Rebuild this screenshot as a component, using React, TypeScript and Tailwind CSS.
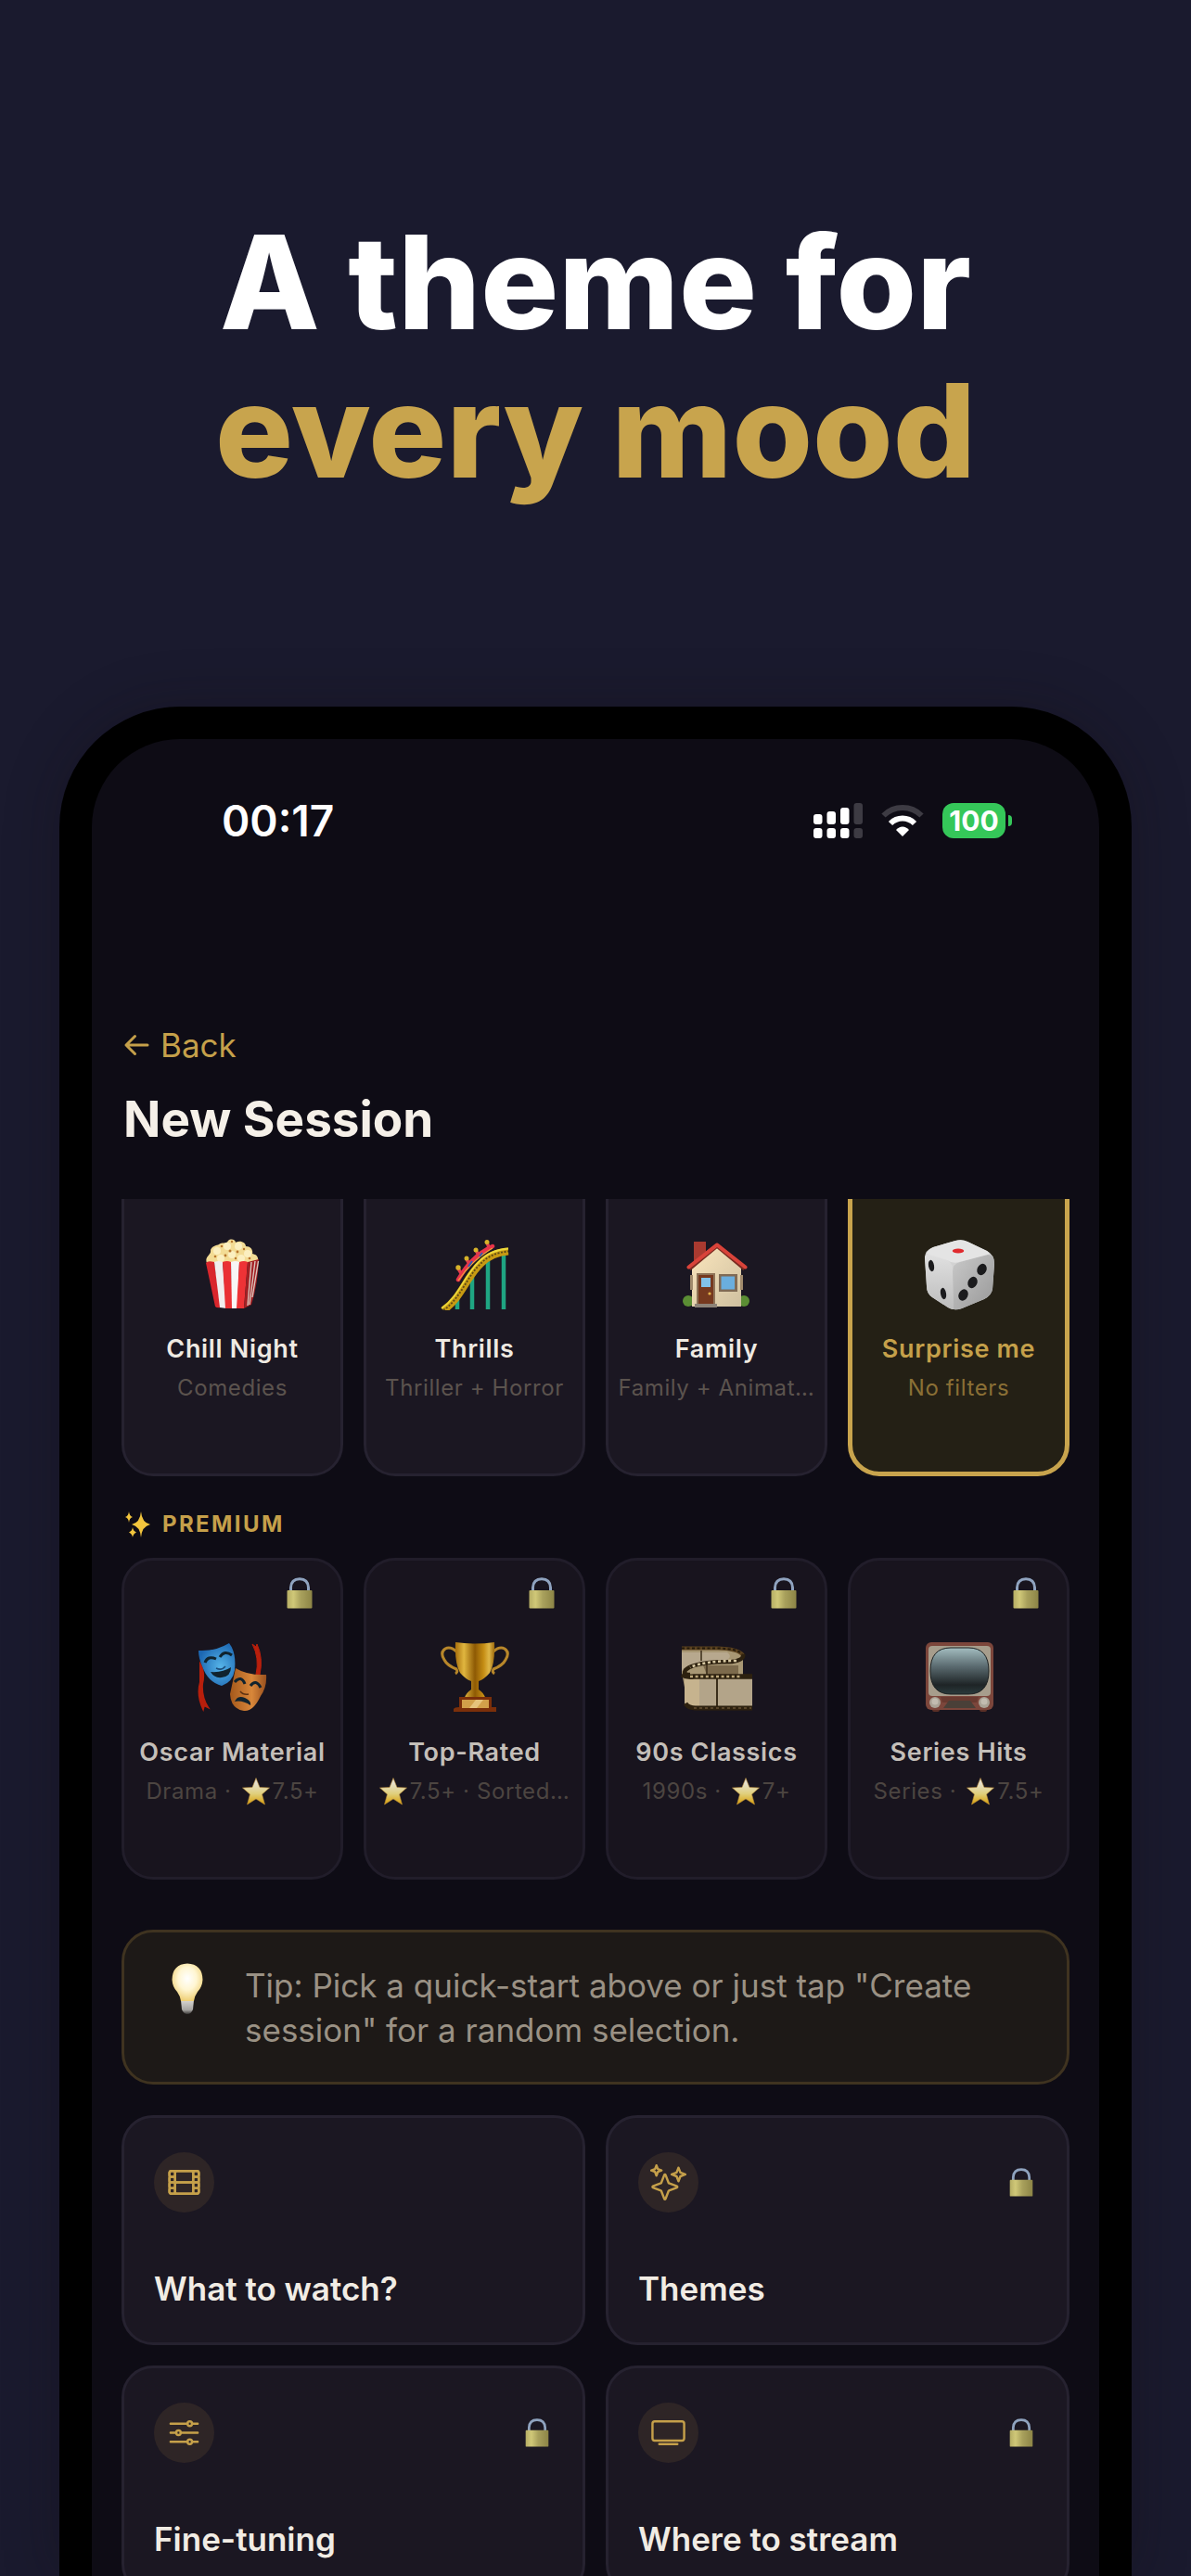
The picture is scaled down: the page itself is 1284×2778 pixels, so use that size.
import React from 'react';
import { IoFilmOutline, IoOptionsOutline, IoSparklesOutline, IoTvOutline } from 'react-icons/io5';

const Popcorn = () => (
  <svg viewBox="0 0 78 78" className="w-[78px] h-[78px]" aria-hidden="true">
    <path d="M11 27 C8 20 16 18 15 14 C15 9 22 8 24 7 C27 4 32 7 34 3 C37 0 42 2 42 5 C47 2 53 5 53 9 C59 9 61 14 60 17 C66 18 67 22 66 27 Z" fill="#f3dc95" />
    <g fill="#fbefc0">
      <circle cx="22" cy="14" r="4" /><circle cx="33" cy="9" r="4" /><circle cx="45" cy="9" r="4" />
      <circle cx="55" cy="17" r="4" /><circle cx="38" cy="18" r="4" /><circle cx="26" cy="22" r="4" /><circle cx="48" cy="22" r="4" />
    </g>
    <g fill="#b9772f">
      <circle cx="27" cy="9" r="1.3" /><circle cx="38" cy="4" r="1.2" /><circle cx="36" cy="14" r="1.5" /><circle cx="20" cy="20" r="1.3" />
      <circle cx="44" cy="15" r="1.4" /><circle cx="51" cy="12" r="1.2" /><circle cx="31" cy="19" r="1.4" /><circle cx="42" cy="22" r="1.2" /><circle cx="57" cy="22" r="1.3" />
    </g>
    <path d="M10 27 Q12 24 19 26 L26 75 Q22 76 20 74 Z" fill="#d9262c" />
    <path d="M19 26 Q24 24 28 26 L32 76 L25 75 Z" fill="#f1eeee" />
    <path d="M28 26 Q33 24 37 26 L39 76 L31 76 Z" fill="#ea3034" />
    <path d="M37 26 Q42 24 46 26 L44 76 L38 76 Z" fill="#f8f6f6" />
    <path d="M46 26 Q51 24 55 26 L51 76 L43 76 Z" fill="#ee3336" />
    <path d="M55 26 L67 23 Q66 50 59 72 L51 76 Z" fill="#a32024" />
    <path d="M59 26 L55 73 M63 25 L57 72 M66.500 25 L60 64" stroke="#d9c4bb" strokeWidth="1.400" />
  </svg>
);

const Coaster = () => (
  <svg viewBox="0 0 78 78" className="w-[78px] h-[78px]" fill="none" aria-hidden="true">
    <path d="M20 64 V77 M36 42 V77 M53 24 V77 M70 17 V77" stroke="#1fa582" strokeWidth="4.500" />
    <path d="M5 78 C24 65 30 42 45 28 Q56 16 75 14.500" stroke="#c79a12" strokeWidth="8" />
    <path d="M3 76 C22 63 28 40 43 26 Q55 13 75 11.500" stroke="#ecd93c" strokeWidth="1.800" />
    <path d="M5 78 C24 65 30 42 45 28 Q56 16 75 14.500" stroke="#5b4a18" strokeWidth="1.800" strokeDasharray="2 1.600" />
    <path d="M21 45 Q27 35 32 29 Q43 16 58 9" stroke="#e8334a" strokeWidth="4.500" strokeLinecap="round" />
    <path d="M21 46 Q36 24 58 11" stroke="#f0a23a" strokeWidth="1.300" />
    <path d="M24 38 L21 33 M33 28 L30 23 M43 19 L40 13 M54 10 L52 5" stroke="#e03a4d" strokeWidth="3.500" />
    <path d="M32 31 L36 25 M44 20 L47 16" stroke="#345cb0" strokeWidth="2" />
    <g fill="#d7b32a">
      <circle cx="21" cy="32" r="2.700" /><circle cx="30" cy="22" r="2.500" /><circle cx="40" cy="13" r="2.500" /><circle cx="52" cy="4.500" r="2.500" />
    </g>
  </svg>
);

const House = () => (
  <svg viewBox="0 0 78 78" className="w-[78px] h-[78px]" aria-hidden="true">
    <defs>
      <linearGradient id="houseWall" x1="0" y1="0" x2="1" y2="1">
        <stop offset="0" stopColor="#fbe6bd" /><stop offset="1" stopColor="#cfc0a0" />
      </linearGradient>
    </defs>
    <path d="M14 4 H27 V16 L14 27 Z" fill="#a93a30" />
    <circle cx="8" cy="68" r="6" fill="#5b8e34" />
    <circle cx="68" cy="68" r="6" fill="#5b8e34" />
    <path d="M12 30 L39 8 L65 30 V74 H12 Z" fill="url(#houseWall)" />
    <path d="M9 33 L39 8 L69 33" fill="none" stroke="#7a2a20" strokeWidth="5" strokeLinejoin="round" />
    <path d="M8.500 31.500 L39 7.500 L69.500 31.500" fill="none" stroke="#d9433a" strokeWidth="4" strokeLinejoin="round" strokeLinecap="round" />
    <rect x="10" y="40" width="3" height="16" fill="#a08a6c" />
    <rect x="64" y="40" width="3" height="16" fill="#a08a6c" />
    <rect x="17" y="38" width="20" height="35" fill="#8e7358" />
    <rect x="19" y="40" width="16" height="32" fill="#76391f" />
    <rect x="22" y="43" width="10" height="10" fill="#82c2ea" />
    <circle cx="31" cy="60" r="1.600" fill="#e4b24a" />
    <rect x="41" y="39" width="20" height="19" fill="#806b55" />
    <rect x="43.500" y="41.500" width="14.500" height="14" fill="#6aaede" />
    <rect x="15" y="71" width="24" height="4" fill="#8d8378" />
  </svg>
);

const Dice = () => (
  <svg viewBox="0 0 78 78" className="w-[78px] h-[78px]" aria-hidden="true">
    <defs>
      <linearGradient id="diceLeft" x1="0" y1="0" x2="0" y2="1">
        <stop offset="0" stopColor="#e0e0e0" /><stop offset="1" stopColor="#bdbdbd" />
      </linearGradient>
      <linearGradient id="diceRight" x1="0" y1="0" x2="1" y2="1">
        <stop offset="0" stopColor="#c9c9c9" /><stop offset="1" stopColor="#989898" />
      </linearGradient>
    </defs>
    <path d="M2 22 Q2 13 11 10 L35 3 Q42 1 48 4 L69 14 Q77 18 77 28 L75 55 Q74 62 66 66 L42 76 Q34 79 27 75 L10 64 Q4 60 4 52 Z" fill="#d2d2d2" />
    <path d="M2 20 Q4 16 10 18 L24 23 Q32 26 32 33 L33 77 Q30 77 27 75 L10 64 Q4 60 4 52 Z" fill="url(#diceLeft)" />
    <path d="M32 36 Q32 28 40 26 L68 18 Q77 17 77 27 L75 55 Q74 62 66 66 L42 76 Q37 78 33 77 Z" fill="url(#diceRight)" />
    <path d="M4 17 Q5 13 11 10 L35 3 Q42 1 48 4 L69 14 Q73 17 70 18 L39 26 Q32 28 26 24 Z" fill="#e4e4e4" />
    <ellipse cx="38" cy="14" rx="6.200" ry="2.600" fill="#e02a2e" />
    <g fill="#1b1b1d">
      <ellipse cx="9" cy="30" rx="3" ry="6.200" transform="rotate(-10 9 30)" />
      <ellipse cx="22" cy="60" rx="3" ry="6.200" transform="rotate(-10 22 60)" />
      <ellipse cx="63.500" cy="34" rx="5" ry="6.400" transform="rotate(25 63.500 34)" />
      <ellipse cx="53.500" cy="48" rx="5" ry="6.400" transform="rotate(25 53.500 48)" />
      <ellipse cx="43.500" cy="61.500" rx="5" ry="6.400" transform="rotate(25 43.500 61.500)" />
    </g>
  </svg>
);

const Masks = () => (
  <svg viewBox="0 0 78 78" className="w-[78px] h-[78px]" fill="none" aria-hidden="true">
    <defs>
      <radialGradient id="maskBlue" cx="0.600" cy="0.550" r="0.600">
        <stop offset="0" stopColor="#56b4e8" /><stop offset="1" stopColor="#1c67b2" />
      </radialGradient>
      <linearGradient id="maskOrange" x1="0" y1="0" x2="1" y2="0">
        <stop offset="0" stopColor="#a4581b" /><stop offset="0.600" stopColor="#d8873a" /><stop offset="1" stopColor="#99501e" />
      </linearGradient>
    </defs>
    <path d="M4 25 Q9 34 6 46 Q5 60 12 71 L8 69 L7 73 Q0 58 4 44 Z" fill="#b81f0c" stroke="#b81f0c" strokeWidth="2" />
    <path d="M60 3 L64 6 L65 3 Q72 18 68 36 L64 36 Q68 18 60 3 Z" fill="#b81f0c" stroke="#b81f0c" strokeWidth="1" />
    <path d="M2 10 Q20 11 35 2 Q43 12 41 31 Q39 44 27 48 Q12 44 6 27 Q2 18 2 10 Z" fill="url(#maskBlue)" />
    <path d="M9 23 Q12 15 21 19 M25 17 Q30 9 38 15" stroke="#10232e" strokeWidth="3" />
    <path d="M15 33 Q28 34 37 28 Q37 38 27 39 Q19 40 15 33 Z" fill="#10232e" />
    <path d="M21 29 Q27 32 31 27" stroke="#1c4d7b" strokeWidth="1.500" />
    <path d="M42 29 Q55 37 75 36 Q76 49 69 59 Q61 76 51 75 Q37 73 36 57 Q39 43 42 29 Z" fill="url(#maskOrange)" />
    <path d="M41 44 Q48 36 52 46 M58 48 Q64 40 69 50" stroke="#10232e" strokeWidth="3" />
    <path d="M41 65 Q44 58 52 61 Q59 64 58 69 Q49 63 41 65 Z" fill="#10232e" />
    <path d="M47 54 Q50 58 56 57" stroke="#5d3212" strokeWidth="1.500" />
  </svg>
);

const Trophy = () => (
  <svg viewBox="0 0 78 78" className="w-[78px] h-[78px]" fill="none" aria-hidden="true">
    <defs>
      <linearGradient id="cupGold" x1="0" y1="0" x2="1" y2="0">
        <stop offset="0" stopColor="#a86f0c" /><stop offset="0.220" stopColor="#e0b63f" /><stop offset="0.500" stopColor="#8e5a04" />
        <stop offset="0.720" stopColor="#c58d14" /><stop offset="0.860" stopColor="#dfb748" /><stop offset="1" stopColor="#9c680c" />
      </linearGradient>
    </defs>
    <path d="M20 12 Q13 5 7 8 Q1 12 6 20 Q9 26 19 30 Q21 33 18 35" stroke="#b8872a" strokeWidth="3" />
    <path d="M58 12 Q65 5 71 8 Q77 12 72 20 Q69 26 59 30 Q57 33 60 35" stroke="#b8872a" strokeWidth="3" />
    <path d="M18 1 Q39 4 60 1 Q61 24 55 34 Q49 41 43 43 L43 52 Q49 56 50 61 H28 Q29 56 35 52 L35 43 Q29 41 23 34 Q17 24 18 1 Z" fill="url(#cupGold)" />
    <path d="M22 60 H57 V71 H62 V76 H16 V73 Q17 71 22 71 Z" fill="#7b2f0a" />
    <rect x="25" y="63" width="29" height="9" fill="#d2a04a" />
    <path d="M33 72 L40 63 H48 L41 72 Z" fill="#e6c37c" />
  </svg>
);

const FilmRoll = () => (
  <svg viewBox="0 0 78 78" className="w-[78px] h-[78px]" fill="none" aria-hidden="true">
    <path d="M1 7 L40 7 Q62 8 67 14 L67 54 Q55 62 6 60 L1 34 Z" fill="#a89774" />
    <path d="M1 12 H50 Q56 16 50 20 Q14 22 4 32 H1 Z" fill="#b7a88e" />
    <path d="M24 26 H62 V36 H28 Z" fill="#7c6a4c" />
    <path d="M1 7.500 H40 Q62 8 67 15" stroke="#5b421f" strokeWidth="4" />
    <path d="M1 7.500 H40 Q62 8 66 14" stroke="#241a0c" strokeWidth="2" strokeDasharray="3 2.500" />
    <path d="M22 10 V21 M28 24 V36" stroke="#3a2c19" strokeWidth="1.500" />
    <path d="M67 14 Q69 20 55 22 Q14 22 5 31 Q2 36 10 36" stroke="#2d210f" strokeWidth="4.500" />
    <path d="M60 21 Q26 21 10 28" stroke="#d9caa4" strokeWidth="2.600" strokeDasharray="3 2.600" />
    <path d="M4 37 H77 V73 H14 Q5 72 4 66 Z" fill="#b3a489" />
    <path d="M4 41 Q5 37 20 40 V70 H10 Q5 69 4 66 Z" fill="#c6b38e" />
    <path d="M1 36 Q6 39 14 38 H77" stroke="#2d210f" strokeWidth="5.500" />
    <path d="M10 38 H66" stroke="#bda87b" strokeWidth="2.600" strokeDasharray="3 2.600" />
    <path d="M5 67 Q8 72 16 72 H77" stroke="#2d210f" strokeWidth="5" />
    <path d="M14 72 H76" stroke="#57452a" strokeWidth="2" strokeDasharray="3 3" />
    <path d="M39 40 V70" stroke="#2d210f" strokeWidth="1.800" />
  </svg>
);

const RetroTv = () => (
  <svg viewBox="0 0 78 78" className="w-[78px] h-[78px]" aria-hidden="true">
    <defs>
      <linearGradient id="tvScreen" x1="0" y1="0" x2="0" y2="1">
        <stop offset="0" stopColor="#a3bdc0" /><stop offset="0.400" stopColor="#5b6b70" /><stop offset="0.800" stopColor="#1e2426" /><stop offset="1" stopColor="#2b3a3c" />
      </linearGradient>
    </defs>
    <rect x="10" y="70" width="8" height="6" rx="2" fill="#5b2f26" />
    <rect x="61" y="70" width="8" height="6" rx="2" fill="#5b2f26" />
    <rect x="3" y="1" width="73" height="73" rx="6" fill="#7c463b" />
    <rect x="6" y="5" width="67" height="54" rx="4" fill="#a79d8c" />
    <path d="M8 32 Q8 7 30 7 H49 Q71 7 71 32 Q71 57 49 57 H30 Q8 57 8 32 Z" fill="url(#tvScreen)" stroke="#1d2122" strokeWidth="1" />
    <path d="M19 60 H60 L58 66 H21 Z" fill="#693a30" />
    <path d="M28 64 H51 L57 72 H22 Z" fill="#4a4038" />
    <circle cx="13" cy="66" r="6" fill="#aaa396" />
    <circle cx="66" cy="66" r="6" fill="#aaa396" />
    <circle cx="13" cy="65" r="3.500" fill="#c2bcb0" />
    <circle cx="66" cy="65" r="3.500" fill="#c2bcb0" />
  </svg>
);

const Lock = ({ className }: { className: string }) => (
  <svg viewBox="0 0 28 34" className={className} aria-label="Locked">
    <defs>
      <linearGradient id="lockBody" x1="0" y1="0" x2="1" y2="0">
        <stop offset="0" stopColor="#b5ad64" /><stop offset="0.250" stopColor="#d0c878" /><stop offset="0.550" stopColor="#a8a05c" /><stop offset="1" stopColor="#8c8446" />
      </linearGradient>
    </defs>
    <path d="M4.500 16 V11 Q5 1.800 14 1.800 Q23 1.800 23.500 11 V16" fill="none" stroke="#8fa3bf" strokeWidth="3" />
    <rect x="0.500" y="14" width="27" height="19.500" rx="1" fill="url(#lockBody)" />
  </svg>
);

const Star = () => (
  <svg viewBox="0 0 30 30" className="w-[30px] h-[30px] shrink-0" aria-hidden="true">
    <defs>
      <linearGradient id="starGold" x1="0" y1="0" x2="0" y2="1">
        <stop offset="0.200" stopColor="#e6e0cc" /><stop offset="0.600" stopColor="#e0cf7a" /><stop offset="1" stopColor="#d99f08" />
      </linearGradient>
    </defs>
    <path d="M15 0.500 L19 10.500 L29.500 11 L21.500 18 L24.500 29 L15 23 L5.500 29 L8.500 18 L0.500 11 L11 10.500 Z" fill="url(#starGold)" stroke="#b98a35" strokeWidth="0.600" strokeLinejoin="round" />
  </svg>
);

const SparkleMark = () => (
  <svg viewBox="0 0 28 28" className="w-7 h-7" fill="#f2c53d" aria-hidden="true">
    <path d="M17 0 Q18 12 27 14 Q18 16 17 28 Q16 16 7 14 Q16 12 17 0 Z" />
    <path d="M4 0 Q4.500 5 8 6 Q4.500 7 4 12 Q3.500 7 0 6 Q3.500 5 4 0 Z" />
    <path d="M8 17 Q8.500 21 12 22.500 Q8.500 24 8 28 Q7.500 24 4 22.500 Q7.500 21 8 17 Z" />
  </svg>
);

const Bulb = () => (
  <svg viewBox="0 0 34 56" className="w-[34px] h-14 shrink-0" aria-hidden="true">
    <defs>
      <radialGradient id="bulbGlow" cx="0.500" cy="0.400" r="0.600">
        <stop offset="0" stopColor="#ffffff" /><stop offset="0.500" stopColor="#fff6d2" /><stop offset="1" stopColor="#efcf74" />
      </radialGradient>
      <linearGradient id="bulbBase" x1="0" y1="0" x2="0" y2="1">
        <stop offset="0" stopColor="#d8d6d2" /><stop offset="0.700" stopColor="#a5a3a0" /><stop offset="1" stopColor="#3a3836" />
      </linearGradient>
    </defs>
    <path d="M10 40 H24 L23 50 Q21 55 17 55 Q13 55 11 50 Z" fill="url(#bulbBase)" />
    <path d="M17 0.500 Q33 1 33.500 18 Q33 26 28 31 Q25 35 24 41 H10 Q9 35 6 31 Q1 26 0.500 18 Q1 1 17 0.500 Z" fill="url(#bulbGlow)" />
  </svg>
);

const quickStarts = [
  { title: 'Chill Night', sub: 'Comedies', art: <Popcorn /> },
  { title: 'Thrills', sub: 'Thriller + Horror', art: <Coaster /> },
  { title: 'Family', sub: 'Family + Animat…', art: <House /> },
  { title: 'Surprise me', sub: 'No filters', art: <Dice />, selected: true },
];

const premiumStarts = [
  { title: 'Oscar Material', sub: <><span className="mr-2">Drama ·</span><Star /><span>7.5+</span></>, art: <Masks /> },
  { title: 'Top-Rated', sub: <><Star /><span>7.5+ · Sorted…</span></>, art: <Trophy /> },
  { title: '90s Classics', sub: <><span className="mr-2">1990s ·</span><Star /><span>7+</span></>, art: <FilmRoll /> },
  { title: 'Series Hits', sub: <><span className="mr-2">Series ·</span><Star /><span>7.5+</span></>, art: <RetroTv /> },
];

const sections = [
  { title: 'What to watch?', icon: IoFilmOutline, locked: false },
  { title: 'Themes', icon: IoSparklesOutline, locked: true },
  { title: 'Fine-tuning', icon: IoOptionsOutline, locked: true },
  { title: 'Where to stream', icon: IoTvOutline, locked: true },
];

const StatusBar = () => (
  <div className="flex items-center justify-between h-14 pl-[140px] pr-[94px]">
    <span className="text-[46px] leading-[56px] font-semibold text-white">00:17</span>
    <div className="flex items-center gap-5">
      <svg viewBox="0 0 53 38" className="w-[53px] h-[38px]" fill="#fff" aria-label="Signal">
        <rect x="0" y="12" width="9.500" height="11" rx="3" />
        <rect x="14.500" y="9" width="9.500" height="14" rx="3" />
        <rect x="29" y="5" width="9.500" height="18" rx="3" />
        <rect x="43.500" y="0" width="9.500" height="23" rx="3" fill="#3d3b43" />
        <rect x="0" y="27" width="9.500" height="11" rx="3" />
        <rect x="14.500" y="27" width="9.500" height="11" rx="3" />
        <rect x="29" y="27" width="9.500" height="11" rx="3" />
        <rect x="43.500" y="27" width="9.500" height="11" rx="3" fill="#3d3b43" />
      </svg>
      <svg viewBox="0 0 46 34" className="w-[46px] h-[34px]" fill="none" aria-label="Wi-Fi">
        <path d="M2.500 11.500 Q11 3 23 3 Q35 3 43.500 11.500" stroke="#3d3b43" strokeWidth="6" />
        <path d="M10 20 Q15.500 14.500 23 14.500 Q30.500 14.500 36 20" stroke="#fff" strokeWidth="6" />
        <path d="M23 34 L16 27 Q19 23.500 23 23.500 Q27 23.500 30 27 Z" fill="#fff" />
      </svg>
      <div className="flex items-center gap-[3px]">
        <span className="flex items-center justify-center w-[68px] h-[38px] rounded-[12px] bg-[#35c759] text-[30px] leading-[38px] font-bold text-white">100</span>
        <span className="w-1 h-3 rounded-r-full bg-[#35c759]"></span>
      </div>
    </div>
  </div>
);

const App: React.FC = () => {
  return (
    <main className="flex flex-col h-screen overflow-hidden bg-[#1a1a2e] font-['Inter','Liberation_Sans',sans-serif]">
      <h1 className="pt-[224px] text-center text-[140px] leading-[160px] font-extrabold text-white">
        A theme for
        <span className="block text-[#c8a44d]">every mood</span>
      </h1>

      <div className="flex flex-col flex-1 min-h-0 mt-[218px] mx-16 border-[35px] border-b-0 border-black rounded-t-[130px] bg-[#0e0c15] overflow-hidden shadow-[0_0_60px_rgba(20,12,16,0.3)]">
        <div className="pt-[60px]">
          <StatusBar />
        </div>

        <header className="flex flex-col items-start gap-6 px-[34px] pt-[190px] pb-[54px]">
          <button type="button" className="flex items-center gap-3 text-[35px] leading-[48px] text-[#c5a04a]">
            <svg viewBox="0 0 28 24" className="w-7 h-6" fill="none" stroke="currentColor" strokeWidth="3" strokeLinecap="round" strokeLinejoin="round" aria-hidden="true">
              <path d="M26 12 H3 M12.500 2.500 L3 12 L12.500 21.500" />
            </svg>
            Back
          </button>
          <h2 className="text-[53px] leading-[64px] font-bold text-[#f5f0e8]">New Session</h2>
        </header>

        <div className="flex-1 min-h-0 px-8 overflow-hidden">
          <div className="grid grid-cols-4 gap-[22px] -mt-12">
            {quickStarts.map((item) => (
              <button
                key={item.title}
                type="button"
                aria-pressed={!!item.selected}
                className={
                  item.selected
                    ? 'flex flex-col items-center h-[347px] pt-[85px] rounded-[34px] border-[5px] border-[#c8a44d] bg-[#242015] text-[#c5a04a]'
                    : 'flex flex-col items-center h-[347px] pt-[87px] rounded-[34px] border-[3px] border-[#262230] bg-[#1b1722] text-[#efeae2]'
                }
              >
                {item.art}
                <span className="mt-6 text-[27px] leading-[36px] font-semibold tracking-wide whitespace-nowrap">{item.title}</span>
                <span className={item.selected ? 'mt-2 text-2xl leading-[32px] tracking-wide whitespace-nowrap text-[#8a6f35]' : 'mt-2 text-2xl leading-[32px] tracking-wide whitespace-nowrap text-[#5b534e]'}>
                  {item.sub}
                </span>
              </button>
            ))}
          </div>

          <h3 className="flex items-center gap-3 mt-9 mb-5 pl-1 text-2xl leading-[32px] font-bold tracking-widest text-[#c5a04a]">
            <SparkleMark />
            PREMIUM
          </h3>

          <div className="grid grid-cols-4 gap-[22px]">
            {premiumStarts.map((item) => (
              <button key={item.title} type="button" className="relative flex flex-col items-center h-[347px] pt-[87px] rounded-[34px] border-[3px] border-[#211d2a] bg-[#18141e] text-[#c4bfb9]">
                <span className="absolute top-[18px] right-[30px]">
                  <Lock className="w-7 h-[34px]" />
                </span>
                {item.art}
                <span className="mt-6 text-[27px] leading-[36px] font-semibold tracking-wide whitespace-nowrap">{item.title}</span>
                <span className="flex items-center gap-[3px] mt-2 text-2xl leading-[32px] tracking-wide whitespace-nowrap text-[#4c4541]">{item.sub}</span>
              </button>
            ))}
          </div>

          <div className="flex items-start gap-[45px] mt-[54px] mb-[33px] pt-[33px] pb-8 px-[51px] rounded-[34px] border-[3px] border-[#3f3320] bg-[#1d1917]">
            <Bulb />
            <p className="text-[35px] leading-[48px] text-[#9a9184]">
              Tip: Pick a quick-start above or just tap "Create session" for a random selection.
            </p>
          </div>

          <div className="grid grid-cols-2 gap-[22px]">
            {sections.map(({ title, icon: Icon, locked }) => (
              <button key={title} type="button" className="flex flex-col justify-between h-[248px] pt-[37px] pb-[34px] px-8 rounded-[34px] border-[3px] border-[#262230] bg-[#1b1722] text-left">
                <span className="flex items-center justify-between w-full pr-1">
                  <span className="flex items-center justify-center w-[65px] h-[65px] rounded-full bg-[#2e2526]">
                    <Icon className="w-[39px] h-[39px] text-[#c5a04a]" />
                  </span>
                  {locked && <Lock className="w-[26px] h-[31px]" />}
                </span>
                <span className="text-[35px] leading-[48px] font-semibold text-[#f1ece4]">{title}</span>
              </button>
            ))}
          </div>
        </div>
      </div>
    </main>
  );
};

export default App;
